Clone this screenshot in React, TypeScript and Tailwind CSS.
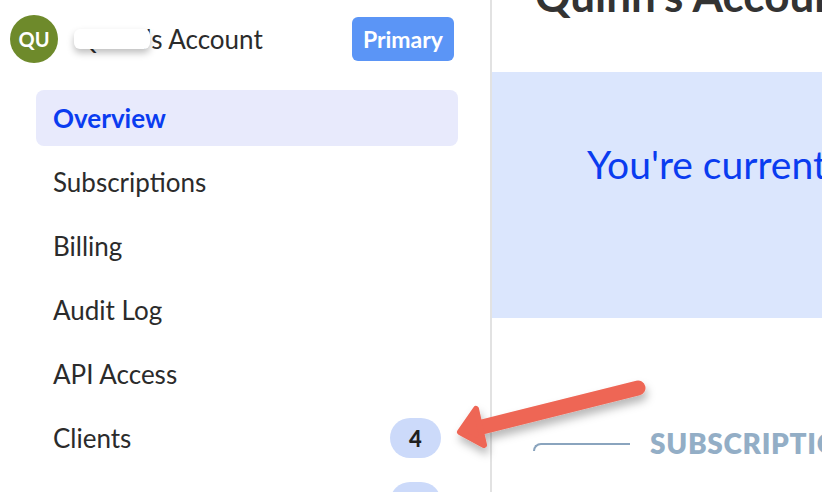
import React from "react"

const navItems = [
  { label: "Overview", active: true },
  { label: "Subscriptions" },
  { label: "Billing" },
  { label: "Audit Log" },
  { label: "API Access" },
  { label: "Clients", count: "4" },
  { label: "Users", count: "2" },
]

function Arrow() {
  return (
    <svg
      className="pointer-events-none absolute left-0 top-0"
      width="822"
      height="492"
      viewBox="0 0 822 492"
    >
      <defs>
        <filter id="shadow" x="-20%" y="-20%" width="140%" height="160%">
          <feDropShadow dx="2" dy="6" stdDeviation="4" floodColor="#000" floodOpacity="0.28" />
        </filter>
      </defs>
      <g filter="url(#shadow)" fill="#ee6655" stroke="#ee6655">
        <line x1="638" y1="388" x2="478" y2="428" strokeWidth="15" strokeLinecap="round" />
        <polygon points="460,432 476,409 484,445" strokeWidth="6" strokeLinejoin="round" />
      </g>
    </svg>
  )
}

export default function App() {
  return (
    <div
      className="relative flex h-[492px] w-[822px] overflow-hidden bg-white text-[#2b2b2b]"
      style={{ fontFamily: "Lato, 'Noto Sans', sans-serif" }}
    >
      <aside className="flex w-[492px] shrink-0 flex-col border-r-2 border-[#e2e2e2]">
        <div className="flex h-[78px] shrink-0 items-center pl-[10px] pr-[36px]">
          <div className="flex h-[48px] w-[48px] shrink-0 items-center justify-center rounded-full bg-[#6e8a2b] text-[20px] font-bold text-white">
            QU
          </div>
          <div className="relative ml-[18px] flex-1 text-[26px]">
            Quinn's Account
            <span className="absolute left-[-2px] top-[9px] h-[20px] w-[76px] rounded-md bg-white shadow-[0_4px_7px_rgba(0,0,0,0.25)]" />
          </div>
          <span className="rounded-md bg-[#5b95f6] px-[11px] py-[6px] text-[23px] font-bold leading-[32px] text-white">
            Primary
          </span>
        </div>
        <nav className="mt-[12px] flex shrink-0 flex-col gap-[8px] pl-[36px] pr-[32px]">
          {navItems.map((item) => (
            <div
              key={item.label}
              className={
                item.active
                  ? "flex h-[56px] shrink-0 items-center rounded-lg bg-[#e8eafc] pl-[17px] pr-[17px] text-[26px] font-bold text-[#0a3cf0]"
                  : "flex h-[56px] shrink-0 items-center pl-[17px] pr-[17px] text-[26px] text-[#2b2b2b]"
              }
            >
              <span className="flex-1">{item.label}</span>
              {item.count && (
                <span className="flex h-[40px] w-[51px] items-center justify-center rounded-full bg-[#ccdafa] text-[22px] font-black text-[#1f1f1f]">
                  {item.count}
                </span>
              )}
            </div>
          ))}
        </nav>
      </aside>

      <main className="flex min-w-0 flex-1 flex-col">
        <h1 className="-mt-[38px] h-[110px] shrink-0 whitespace-nowrap pl-[43px] text-[44px] font-bold text-[#333]">
          Quinn's Account
        </h1>
        <div className="flex h-[246px] shrink-0 items-center overflow-hidden bg-[#dbe6fd] pb-[62px] pl-[95px]">
          <p className="whitespace-nowrap text-[39px] text-[#0a3cf0]">You're currently on the Free plan</p>
        </div>
        <div className="mt-[104px] flex items-center pl-[41px]">
          <div className="mt-[8px] h-[8px] w-[97px] shrink-0 rounded-tl-lg border-l-2 border-t-2 border-[#8aa4be]" />
          <h2 className="ml-[20px] whitespace-nowrap text-[28px] font-extrabold tracking-wide text-[#93aec6]">
            SUBSCRIPTIONS
          </h2>
        </div>
      </main>

      <Arrow />
    </div>
  )
}
